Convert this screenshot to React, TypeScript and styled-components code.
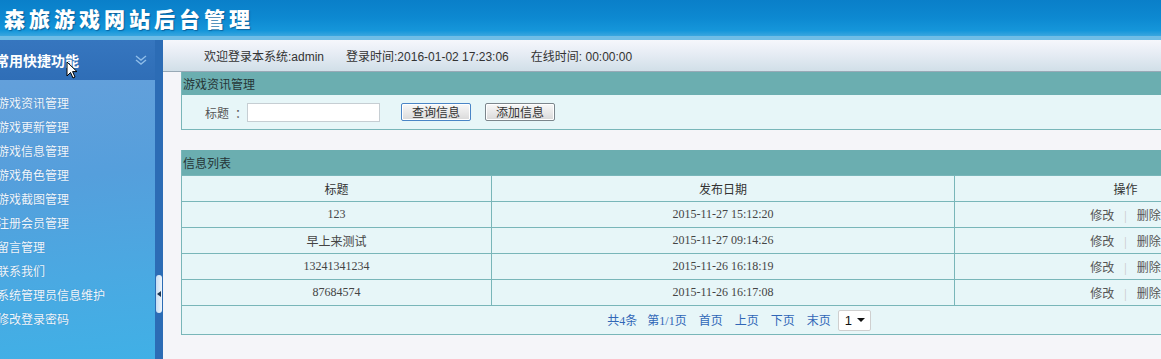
import React from 'react';
import styled, { createGlobalStyle } from 'styled-components';

const GlobalStyle = createGlobalStyle`
  html, body {
    margin: 0;
    padding: 0;
    overflow: hidden;
  }
  body {
    font-family: "Noto Sans CJK SC", "Liberation Sans", sans-serif;
    font-size: 12px;
    color: #333;
    background: #f5f5f9;
  }
`;

const Page = styled.div`
  position: relative;
  width: 1161px;
  height: 359px;
  overflow: hidden;
  display: flex;
  flex-direction: column;
`;

const Header = styled.div`
  height: 36px;
  flex-shrink: 0;
  display: flex;
  align-items: center;
  padding-left: 4px;
  background: linear-gradient(180deg, #0a7fc9 0%, #0d89d1 50%, #1596da 85%, #3aa6df 100%);
  border-bottom: 4px solid #6fbde6;
`;

const SiteTitle = styled.h1`
  margin: 0;
  font-size: 21px;
  font-weight: 900;
  letter-spacing: 4px;
  color: #fff;
  text-shadow: 1px 1px 1px rgba(0, 50, 100, 0.5);
`;

const Body = styled.div`
  flex: 1;
  display: flex;
  min-height: 0;
`;

const Sidebar = styled.div`
  width: 163px;
  flex-shrink: 0;
  display: flex;
`;

const SideMain = styled.div`
  width: 155px;
  display: flex;
  flex-direction: column;
`;

const SideTitle = styled.div`
  height: 40px;
  flex-shrink: 0;
  display: flex;
  align-items: center;
  justify-content: space-between;
  padding-right: 8px;
  background: linear-gradient(180deg, #3676bf 0%, #2f6eb7 100%);
  color: #fff;
  font-size: 14px;
  font-weight: 700;
  text-indent: -5px;
  overflow: hidden;
  white-space: nowrap;
`;

const SideMenu = styled.ul`
  flex: 1;
  margin: 0;
  padding: 11px 0 0;
  list-style: none;
  background: linear-gradient(175deg, #63a0db 0%, #559fdc 35%, #4aa9e2 70%, #40b0e6 100%);
`;

const MenuItem = styled.li`
  height: 24px;
  line-height: 24px;
  margin-left: -3px;
  color: #f0f7fd;
  font-size: 12px;
  white-space: nowrap;
  text-shadow: 0 0 1px rgba(30, 80, 140, 0.4);
`;

const SideStrip = styled.div`
  width: 8px;
  background: #2c6cb5;
  display: flex;
  flex-direction: column;
  align-items: center;
  padding-top: 235px;
`;

const Handle = styled.div`
  width: 6px;
  height: 38px;
  border-radius: 3px;
  background: linear-gradient(90deg, #c7ddf2 0%, #eef5fc 100%);
  display: flex;
  align-items: center;
  justify-content: center;
`;

const HandleArrow = styled.span`
  width: 0;
  height: 0;
  border-top: 3px solid transparent;
  border-bottom: 3px solid transparent;
  border-right: 4px solid #1d3550;
`;

const Main = styled.div`
  flex: 1;
  min-width: 0;
  overflow: hidden;
  background: #f5f5f9;
  border-top-left-radius: 6px;
`;

const InfoBar = styled.div`
  height: 31px;
  display: flex;
  align-items: center;
  gap: 22px;
  padding-left: 41px;
  border-bottom: 1px solid #98a9b6;
  background: linear-gradient(180deg, #f6f7fc 0%, #e6ecf4 45%, #d1dfe8 100%);
  font-family: "Liberation Sans", "Noto Sans CJK SC", sans-serif;
  font-size: 12px;
  color: #333;
  white-space: nowrap;
`;

const Content = styled.div`
  padding-left: 18px;
`;

const Panel = styled.div<{ $gap?: number }>`
  width: 1114px;
  border: 1px solid #79b6b9;
  border-top: none;
  background: #e7f6f8;
  margin-bottom: ${p => p.$gap ?? 0}px;
`;

const PanelHead = styled.div<{ $h: number }>`
  height: ${p => p.$h}px;
  line-height: ${p => p.$h}px;
  padding-left: 1px;
  background: #6baeb0;
  color: #263536;
  font-size: 12px;
`;

const SearchRow = styled.div`
  height: 34px;
  display: flex;
  align-items: center;
  padding-left: 23px;
  color: #555;
`;

const Label = styled.span`
  margin-right: 6px;
`;

const TextInput = styled.input`
  box-sizing: border-box;
  width: 133px;
  height: 19px;
  margin: 0 21px 0 0;
  border: 1px solid #c6ced3;
  background: #fff;
  outline: none;
`;

const Button = styled.button<{ $primary?: boolean }>`
  box-sizing: border-box;
  width: 70px;
  height: 18px;
  margin-right: 14px;
  padding: 0;
  border: 1px solid ${p => (p.$primary ? '#4a85c6' : '#7c868c')};
  border-radius: 2px;
  box-shadow: inset 0 0 0 1px #fff;
  background: linear-gradient(180deg, #f8f8f8 0%, #e6e6e6 60%, #d9d9d9 100%);
  font-family: "Noto Sans CJK SC", sans-serif;
  font-size: 12px;
  line-height: 16px;
  color: #333;
`;

const Table = styled.table`
  width: 100%;
  border-collapse: collapse;
  table-layout: fixed;
`;

const Th = styled.th<{ $w?: number }>`
  width: ${p => (p.$w ? `${p.$w}px` : 'auto')};
  height: 25px;
  padding: 0;
  border-top: 1px solid #79b6b9;
  font-weight: 400;
  font-size: 12px;
  color: #333;
  text-align: center;
  & + & {
    border-left: 1px solid #79b6b9;
  }
`;

const Td = styled.td`
  height: 25px;
  padding: 0;
  border-top: 1px solid #79b6b9;
  text-align: center;
  font-family: "Liberation Serif", "Noto Sans CJK SC", serif;
  font-size: 12px;
  color: #444;
  & + & {
    border-left: 1px solid #79b6b9;
  }
`;

const OpLink = styled.span`
  font-family: "Noto Sans CJK SC", sans-serif;
  color: #555;
`;

const OpSep = styled.span`
  margin: 0 10px;
  color: #c4c4c4;
`;

const PagerCell = styled.td`
  height: 28px;
  padding: 0;
  border-top: 1px solid #79b6b9;
  text-align: center;
  font-family: "Liberation Serif", "Noto Sans CJK SC", serif;
  font-size: 12px;
  color: #3167b7;
`;

const Pager = styled.div`
  display: inline-flex;
  align-items: center;
  gap: 12px;
`;

const PageLink = styled.span<{ $tight?: boolean }>`
  margin-right: ${p => (p.$tight ? '-2px' : '0')};
`;

const PageSelect = styled.span`
  box-sizing: border-box;
  width: 33px;
  height: 21px;
  margin-left: -5px;
  display: inline-flex;
  align-items: center;
  justify-content: space-between;
  padding: 0 5px 0 6px;
  border: 1px solid #cfcfcf;
  border-radius: 2px;
  background: #fff;
  font-family: "Liberation Sans", sans-serif;
  font-size: 13px;
  color: #111;
`;

const Caret = styled.span`
  width: 0;
  height: 0;
  border-left: 4px solid transparent;
  border-right: 4px solid transparent;
  border-top: 4px solid #111;
`;

const Cursor = styled.svg`
  position: absolute;
  left: 66px;
  top: 61px;
`;

const menu = [
  '游戏资讯管理',
  '游戏更新管理',
  '游戏信息管理',
  '游戏角色管理',
  '游戏截图管理',
  '注册会员管理',
  '留言管理',
  '联系我们',
  '系统管理员信息维护',
  '修改登录密码',
];

const rows = [
  { title: '123', date: '2015-11-27 15:12:20' },
  { title: '早上来测试', date: '2015-11-27 09:14:26' },
  { title: '13241341234', date: '2015-11-26 16:18:19' },
  { title: '87684574', date: '2015-11-26 16:17:08' },
];

const App: React.FC = () => {
  return (
    <Page>
      <GlobalStyle />
      <Header>
        <SiteTitle>森旅游戏网站后台管理</SiteTitle>
      </Header>
      <Body>
        <Sidebar>
          <SideMain>
            <SideTitle>
              <span>常用快捷功能</span>
              <svg width="12" height="10" viewBox="0 0 12 10">
                <path d="M1 1 L6 5 L11 1 M1 5 L6 9 L11 5" fill="none" stroke="#8fbde8" strokeWidth="1.4" />
              </svg>
            </SideTitle>
            <SideMenu>
              {menu.map(m => (
                <MenuItem key={m}>{m}</MenuItem>
              ))}
            </SideMenu>
          </SideMain>
          <SideStrip>
            <Handle>
              <HandleArrow />
            </Handle>
          </SideStrip>
        </Sidebar>
        <Main>
          <InfoBar>
            <span>欢迎登录本系统:admin</span>
            <span>登录时间:2016-01-02 17:23:06</span>
            <span>在线时间: 00:00:00</span>
          </InfoBar>
          <Content>
            <Panel $gap={20}>
              <PanelHead $h={23}>游戏资讯管理</PanelHead>
              <SearchRow>
                <Label>标题</Label>
                <span>：</span>
                <TextInput />
                <Button $primary>查询信息</Button>
                <Button>添加信息</Button>
              </SearchRow>
            </Panel>
            <Panel>
              <PanelHead $h={25}>信息列表</PanelHead>
              <Table>
                <thead>
                  <tr>
                    <Th $w={309}>标题</Th>
                    <Th $w={462}>发布日期</Th>
                    <Th>操作</Th>
                  </tr>
                </thead>
                <tbody>
                  {rows.map(r => (
                    <tr key={r.title}>
                      <Td>{r.title}</Td>
                      <Td>{r.date}</Td>
                      <Td>
                        <OpLink>修改</OpLink>
                        <OpSep>|</OpSep>
                        <OpLink>删除</OpLink>
                      </Td>
                    </tr>
                  ))}
                  <tr>
                    <PagerCell colSpan={3}>
                      <Pager>
                        <PageLink $tight>共4条</PageLink>
                        <PageLink>第1/1页</PageLink>
                        <PageLink>首页</PageLink>
                        <PageLink>上页</PageLink>
                        <PageLink>下页</PageLink>
                        <PageLink>末页</PageLink>
                        <PageSelect>
                          1<Caret />
                        </PageSelect>
                      </Pager>
                    </PagerCell>
                  </tr>
                </tbody>
              </Table>
            </Panel>
          </Content>
        </Main>
      </Body>
      <Cursor width="12" height="18" viewBox="0 0 12 18">
        <path d="M1 1 L1 15 L4.5 11.5 L7 17 L9 16 L6.6 10.6 L11 10.6 Z" fill="#fff" stroke="#000" strokeWidth="1" />
      </Cursor>
    </Page>
  );
};

export default App;
